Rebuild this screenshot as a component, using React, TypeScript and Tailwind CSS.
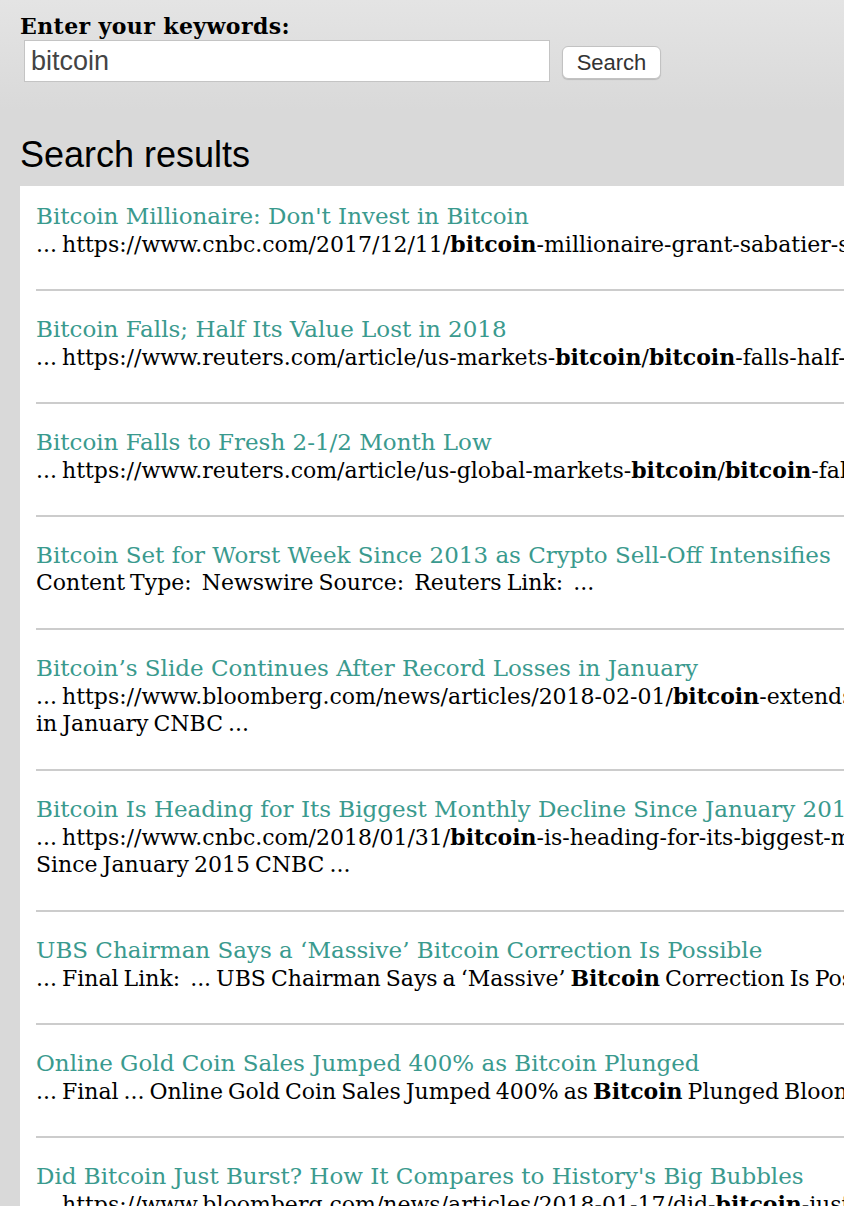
import React from "react";

type Item = { title: string; lines: string[] };

const items: Item[] = [
  {
    title: "Bitcoin Millionaire: Don't Invest in Bitcoin",
    lines: ["... https://www.cnbc.com/2017/12/11/**bitcoin**-millionaire-grant-sabatier-says-dont-invest-in-bitcoin.html ..."],
  },
  {
    title: "Bitcoin Falls; Half Its Value Lost in 2018",
    lines: ["... https://www.reuters.com/article/us-markets-**bitcoin**/**bitcoin**-falls-half-its-value-lost-in-2018 ..."],
  },
  {
    title: "Bitcoin Falls to Fresh 2-1/2 Month Low",
    lines: ["... https://www.reuters.com/article/us-global-markets-**bitcoin**/**bitcoin**-falls-to-fresh-2-1-2-month-low ..."],
  },
  {
    title: "Bitcoin Set for Worst Week Since 2013 as Crypto Sell-Off Intensifies",
    lines: ["Content Type:\u00a0 Newswire Source:\u00a0 Reuters Link:\u00a0 ..."],
  },
  {
    title: "Bitcoin\u2019s Slide Continues After Record Losses in January",
    lines: [
      "... https://www.bloomberg.com/news/articles/2018-02-01/**bitcoin**-extends-slide-after-record-losses",
      "in January CNBC ...",
    ],
  },
  {
    title: "Bitcoin Is Heading for Its Biggest Monthly Decline Since January 2015",
    lines: [
      "... https://www.cnbc.com/2018/01/31/**bitcoin**-is-heading-for-its-biggest-monthly-decline",
      "Since January 2015 CNBC ...",
    ],
  },
  {
    title: "UBS Chairman Says a \u2018Massive\u2019 Bitcoin Correction Is Possible",
    lines: ["... Final Link:\u00a0 ... UBS Chairman Says a \u2018Massive\u2019 **Bitcoin** Correction Is Possible Bloomberg ..."],
  },
  {
    title: "Online Gold Coin Sales Jumped 400% as Bitcoin Plunged",
    lines: ["... Final ... Online Gold Coin Sales Jumped 400% as **Bitcoin** Plunged Bloomberg ..."],
  },
  {
    title: "Did Bitcoin Just Burst? How It Compares to History's Big Bubbles",
    lines: ["... https://www.bloomberg.com/news/articles/2018-01-17/did-**bitcoin**-just-burst-how-it-compares ..."],
  },
];

function Line({ text }: { text: string }) {
  const parts = text.split("**");
  return (
    <div className="h-[28px] whitespace-pre">
      {parts.map((p, i) =>
        i % 2 === 1 ? (
          <b key={i} className="font-bold">
            {p}
          </b>
        ) : (
          <span key={i}>{p}</span>
        )
      )}
    </div>
  );
}

export default function App() {
  return (
    <div className="min-h-[1206px] w-[844px] overflow-hidden bg-[#d9d9d9] bg-[linear-gradient(to_bottom,#e4e4e4_0px,#d9d9d9_110px)]">
      <div className="pl-5 pt-[12px]">
        <div className="font-['DejaVu_Serif',serif] text-[22px] font-bold leading-[28px] tracking-[0.4px] text-black">
          Enter your keywords:
        </div>
        <div className="flex items-center">
          <div className="ml-1 flex h-[42px] w-[526px] items-center border border-[#c4c4c4] bg-white pl-[6px] font-['Liberation_Sans',sans-serif] text-[27px] text-[#444]">
            bitcoin
          </div>
          <button className="ml-3 mt-[3px] flex h-[33px] w-[99px] items-center justify-center rounded-[6px] border border-[#c2c2c2] bg-white font-['Liberation_Sans',sans-serif] text-[22px] text-[#333] shadow-[0_1px_1px_rgba(0,0,0,0.15)]">
            Search
          </button>
        </div>
        <h2 className="mt-[51px] mb-[9px] font-['Liberation_Sans',sans-serif] text-[36px] leading-[44px] text-black">
          Search results
        </h2>
      </div>
      <div className="ml-5 w-[1300px] bg-white px-4 pt-[16px] pb-10 font-['DejaVu_Serif',serif]">
        {items.map((it, idx) => (
          <div
            key={idx}
            className={(idx === 0 ? "pt-0 " : "pt-[24px] ") + "border-b-2 border-[#cccccc] pb-[31px]"}
          >
            <div className="h-[28px] whitespace-pre text-[23px] leading-[28px] text-[#3a9a8e]">{it.title}</div>
            <div className="text-[22px] leading-[28px] text-black [word-spacing:-2px]">
              {it.lines.map((l, i) => (
                <Line key={i} text={l} />
              ))}
            </div>
          </div>
        ))}
      </div>
    </div>
  );
}
